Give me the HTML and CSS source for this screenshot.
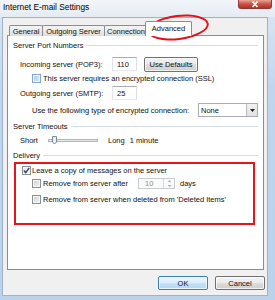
FILE: index.html
```html
<!DOCTYPE html>
<html lang="en">
<head>
    <meta charset="UTF-8">
    <meta name="viewport" content="width=device-width, initial-scale=1.0">
    <title>Internet E-mail Settings</title>
    <link rel="stylesheet" href="styles.css">
</head>
<body>
    <div class="window">
        <div class="titlebar">
            <span class="title">Internet E-mail Settings</span>
            <span class="close">
                <svg width="10" height="7" viewBox="0 0 10 7"><path d="M2.5 0.5 L7.5 6 M7.5 0.5 L2.5 6" stroke="#ffffff" stroke-width="1.6" fill="none"/></svg>
            </span>
        </div>

        <div class="client">
            <div class="tabs">
                <div class="tab tab-general">General</div>
                <div class="tab tab-outgoing">Outgoing Server</div>
                <div class="tab tab-connection">Connection</div>
                <div class="tab tab-advanced active">Advanced</div>
            </div>

            <div class="panel">
                <div class="group-title"><span>Server Port Numbers</span><i></i></div>

                <div class="row port-row first-port">
                    <span class="label">Incoming server (POP3):</span>
                    <span class="textbox">110</span>
                    <span class="button defaults">Use Defaults</span>
                </div>
                <div class="row check-row ssl-row">
                    <span class="checkbox hot"></span>
                    <span class="check-text">This server requires an encrypted connection (SSL)</span>
                </div>
                <div class="row port-row">
                    <span class="label">Outgoing server (SMTP):</span>
                    <span class="textbox">25</span>
                </div>
                <div class="row encrypt-row">
                    <span>Use the following type of encrypted connection:</span>
                    <span class="select">
                        <span class="select-value">None</span>
                        <span class="select-arrow">
                            <svg width="5" height="3" viewBox="0 0 5 3"><path d="M0 0 H5 L2.5 3 Z" fill="#222"/></svg>
                        </span>
                    </span>
                </div>

                <div class="group-title timeouts"><span>Server Timeouts</span><i></i></div>
                <div class="row slider-row">
                    <span class="short">Short</span>
                    <svg class="slider" width="50" height="12" viewBox="0 0 50 12">
                        <rect x="0.5" y="5.5" width="49" height="2" fill="#e7eaea" stroke="#b4b4b4"/>
                        <path d="M4.5 2.5 H8.5 V8 L6.5 10 L4.5 8 Z" fill="#eef1f4" stroke="#7a8a99"/>
                    </svg>
                    <span class="long">Long</span>
                    <span class="minutes">1 minute</span>
                </div>

                <div class="group-title delivery"><span>Delivery</span><i></i></div>
                <div class="marked">
                    <div class="row leave-row">
                        <span class="checkbox checked">
                            <svg width="7" height="7" viewBox="0 0 7 7"><path d="M0.8 3.6 L2.7 5.6 L6.2 0.9" stroke="#2c3f6b" stroke-width="1.4" fill="none"/></svg>
                        </span>
                        <span class="leave-text">Leave a copy of messages on the server</span>
                    </div>
                    <div class="row sub-row after-row">
                        <span class="checkbox"></span>
                        <span class="after-text">Remove from server after</span>
                        <span class="spinbox">
                            <span class="spin-value">10</span>
                            <span class="spin-buttons">
                                <svg width="9" height="9" viewBox="0 0 9 9"><path d="M2.5 3 H6.5 L4.5 1 Z M2.5 6 H6.5 L4.5 8 Z" fill="#a9adb2"/></svg>
                            </span>
                        </span>
                        <span class="days">days</span>
                    </div>
                    <div class="row sub-row deleted-row">
                        <span class="checkbox"></span>
                        <span class="check-text">Remove from server when deleted from 'Deleted Items'</span>
                    </div>
                </div>
            </div>

            <div class="actions">
                <span class="button default">OK</span>
                <span class="button">Cancel</span>
            </div>
        </div>

        <!-- hand drawn marker round the selected tab -->
        <div class="tab-mark"></div>
    </div>
</body>
</html>
```

FILE: styles.css
```css
body {
    margin: 0;
    background: #ffffff;
    font-family: 'Liberation Sans', Arial, sans-serif;
    font-size: 7.5px;
    color: #111111;
}

.window {
    position: relative;
    width: 275px;
    height: 300px;
    background: linear-gradient(#dde7f2, #c0d6ee 30%, #bad2ec);
    overflow: hidden;
}

.titlebar {
    height: 17px;
    display: flex;
    justify-content: space-between;
    align-items: flex-start;
    background: linear-gradient(#f3f6f9, #e4ebf3);
}

.title {
    margin: 2px 0 0 3px;
    font-size: 8.3px;
    color: #000000;
}

.close {
    width: 34px;
    height: 9px;
    margin-right: 3px;
    display: flex;
    align-items: center;
    justify-content: center;
    border: 1px solid #8c3a3a;
    border-top: none;
    border-radius: 0 0 3px 3px;
    background: linear-gradient(#e8a593, #c75547 50%, #b8301f);
    box-sizing: border-box;
}

.client {
    height: 279px;
    margin: 0 7px 0 2px;
    border: 1px solid #9fb2c8;
    background: #f0f0f0;
    box-sizing: border-box;
}

/* tab strip */
.tabs {
    display: flex;
    align-items: flex-end;
    height: 17px;
    margin-left: 6px;
    padding-top: 3px;
    box-sizing: border-box;
    position: relative;
    z-index: 1;
}

.tab {
    height: 11px;
    display: flex;
    align-items: center;
    justify-content: center;
    border: 1px solid #898c95;
    border-bottom: none;
    background: linear-gradient(#f4f4f4, #ebebeb 50%, #dddddd);
    box-sizing: border-box;
    border-radius: 2px 2px 0 0;
    margin-bottom: -1px;
}

.tab-general { width: 34px; }
.tab-outgoing { width: 63px; margin-left: -1px; }
.tab-connection { width: 44px; margin-left: -1px; }

.tab.active {
    width: 47px;
    height: 15px;
    margin-left: -3px;
    padding-bottom: 2px;
    background: #ffffff;
    position: relative;
}

.panel {
    width: 257px;
    height: 235px;
    margin-left: 4px;
    border: 1px solid #898c95;
    background: #ffffff;
    box-sizing: border-box;
}

/* header line of a group */
.group-title {
    display: flex;
    align-items: center;
    height: 14px;
    margin-top: 2px;
    padding: 0 5px;
}

.group-title i {
    flex: 1;
    margin-left: 3px;
    border-top: 1px solid #d5dfe5;
}

.group-title.timeouts { margin-top: 2px; }
.group-title.delivery { margin-top: 1px; }

.row {
    display: flex;
    align-items: center;
}

.port-row {
    height: 14px;
    margin-top: 1px;
    padding-left: 12px;
}

.port-row.first-port { margin-top: 5px; }

.port-row .label { width: 92px; }

.textbox {
    width: 25px;
    height: 14px;
    padding-left: 4px;
    display: flex;
    align-items: center;
    border: 1px solid #abadb3;
    border-color: #abadb3 #dbdfe6 #e3e9ef #e2e3ea;
    box-sizing: border-box;
    background: #ffffff;
}

.button {
    height: 14px;
    display: flex;
    align-items: center;
    justify-content: center;
    border: 1px solid #707070;
    border-radius: 2px;
    background: linear-gradient(#f2f2f2, #ebebeb 49%, #dddddd 50%, #cfcfcf);
    box-sizing: border-box;
    box-shadow: inset 0 0 0 1px rgba(255, 255, 255, 0.7);
}

.button.defaults {
    width: 54px;
    height: 15px;
    margin-left: 7px;
}

.check-row {
    height: 13px;
    margin-top: 1px;
    padding-left: 24px;
}

.checkbox {
    width: 9px;
    height: 9px;
    flex: none;
    display: flex;
    align-items: center;
    justify-content: center;
    border: 1px solid #8e8f8f;
    box-sizing: border-box;
    background: linear-gradient(135deg, #cbcfd5, #f4f4f5);
    box-shadow: inset 0 0 0 1px #f6f6f6;
}

.checkbox.hot {
    border-color: #85a7cc;
    background: linear-gradient(135deg, #a7c7ea, #e3eefa);
}

.checkbox.checked {
    background: linear-gradient(135deg, #e4e6ea, #fbfbfb);
}

.check-text { margin-left: 2px; }

.encrypt-row {
    height: 14px;
    margin-top: 3px;
    padding: 0 5px 0 24px;
    justify-content: space-between;
}

.select {
    width: 60px;
    height: 14px;
    display: flex;
    border: 1px solid #abadb3;
    box-sizing: border-box;
    background: #ffffff;
}

.select-value {
    flex: 1;
    display: flex;
    align-items: center;
    padding-left: 2px;
}

.select-arrow {
    width: 10px;
    display: flex;
    align-items: center;
    justify-content: center;
    border-left: 1px solid #b5b9c0;
    background: linear-gradient(#f2f2f2, #e1e1e1);
}

.slider-row {
    height: 14px;
    padding-left: 12px;
}

.short { width: 28px; }
.long { margin-left: 10px; }
.minutes { margin-left: 5px; }

/* red annotation box round the delivery options */
.marked {
    width: 241px;
    height: 63px;
    margin-left: 6px;
    border: 2px solid #e8141c;
    box-sizing: border-box;
}

.leave-row {
    height: 12px;
    padding-left: 6px;
}

.leave-text { margin-left: 1px; }

.sub-row {
    height: 12px;
    padding-left: 16px;
}

.after-row { margin-top: 1px; }
.deleted-row { margin-top: 4px; }

.after-text {
    width: 95px;
    margin-left: 2px;
}

.spinbox {
    width: 37px;
    height: 11px;
    display: flex;
    border: 1px solid #c8ccd1;
    box-sizing: border-box;
    background: #fbfbfb;
}

.spin-value {
    flex: 1;
    display: flex;
    align-items: center;
    padding-left: 6px;
    color: #8d8d8d;
}

.spin-buttons {
    width: 10px;
    display: flex;
    align-items: center;
    justify-content: center;
    border-left: 1px solid #d6d9dc;
}

.days { margin-left: 5px; }

.actions {
    display: flex;
    justify-content: flex-end;
    gap: 7px;
    margin-top: 6px;
    padding-right: 2px;
}

.actions .button {
    width: 50px;
    height: 14px;
}

.button.default {
    border-color: #3c7fb1;
    background: linear-gradient(#ecf5fc, #dcecfc 49%, #c4e2f8 50%, #b2d8f4);
}

.tab-mark {
    position: absolute;
    left: 147px;
    top: 15px;
    width: 62px;
    height: 25px;
    border: 2px solid #e3111b;
    border-radius: 50%;
    box-sizing: border-box;
    transform: rotate(-7deg);
}
```
